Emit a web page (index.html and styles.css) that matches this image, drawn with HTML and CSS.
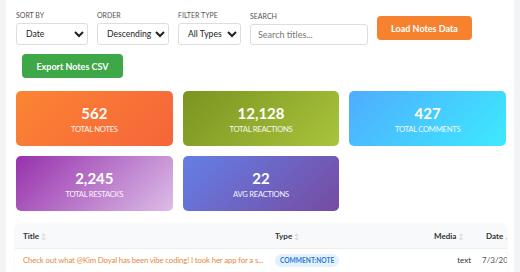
FILE: index.html
```html
<!DOCTYPE html>
<html>
<head>
<meta charset="utf-8">
<link rel="stylesheet" href="styles.css">
</head>
<body>
<div class="panel">
  <div class="controls">
    <div class="field">
      <label class="lbl">Sort by</label>
      <select class="sel w72"><option>Date</option></select>
    </div>
    <div class="field">
      <label class="lbl">Order</label>
      <select class="sel w72"><option>Descending</option></select>
    </div>
    <div class="field">
      <label class="lbl">Filter type</label>
      <select class="sel w63"><option>All Types</option></select>
    </div>
    <div class="field">
      <label class="lbl">Search</label>
      <input class="search" type="text" placeholder="Search titles...">
    </div>
    <button class="btn btn-orange">Load Notes Data</button>
    <button class="btn btn-green">Export Notes CSV</button>
  </div>

  <div class="cards">
    <div class="card c1"><div class="num">562</div><div class="cap">Total Notes</div></div>
    <div class="card c2"><div class="num">12,128</div><div class="cap">Total Reactions</div></div>
    <div class="card c3"><div class="num">427</div><div class="cap">Total Comments</div></div>
    <div class="card c4"><div class="num">2,245</div><div class="cap">Total Restacks</div></div>
    <div class="card c5"><div class="num">22</div><div class="cap">Avg Reactions</div></div>
  </div>

  <div class="table-wrap">
    <table class="tbl">
      <colgroup>
        <col class="col-title"><col class="col-type"><col class="col-media"><col class="col-date">
      </colgroup>
      <thead>
        <tr>
          <th>Title <span class="sort">↕</span></th>
          <th>Type <span class="sort">↕</span></th>
          <th>Media <span class="sort">↕</span></th>
          <th>Date <span class="sort active">↓</span></th>
        </tr>
      </thead>
      <tbody>
        <tr>
          <td class="title">Check out what @Kim Doyal has been vibe coding! I took her app for a s...</td>
          <td class="type"><span class="badge">COMMENT:NOTE</span></td>
          <td class="media">text</td>
          <td class="date">7/3/2025</td>
        </tr>
      </tbody>
    </table>
  </div>
</div>
</body>
</html>
```

FILE: styles.css
```css
* { box-sizing: border-box; }
html, body { margin: 0; padding: 0; }
body {
  background: #f3f4f6;
  font-family: Lato, "Open Sans", "Liberation Sans", sans-serif;
  color: #333;
  height: 272px;
  overflow: hidden;
}
.panel {
  background: #fff;
  margin: 0 6px;
  padding: 11px 8px 0 10px;
  height: 272px;
  overflow: hidden;
}
.controls {
  display: flex;
  flex-wrap: wrap;
  align-items: center;
  gap: 9px;
}
.field { display: flex; flex-direction: column; }
.lbl {
  font-size: 7px;
  text-transform: uppercase;
  color: #555;
  margin-bottom: 3px;
  line-height: 9px;
}
.sel {
  height: 22px;
  border: 1px solid #ddd;
  border-radius: 3px;
  background: #fff;
  font-family: inherit;
  font-size: 8.6px;
  color: #222;
  padding: 0 0 0 5px;
}
.w72 { width: 72px; }
.w63 { width: 63px; }
.search {
  width: 118px;
  height: 21px;
  border: 1px solid #ddd;
  border-radius: 3px;
  font-family: inherit;
  font-size: 9px;
  padding: 0 7px;
}
.search::placeholder { color: #777; }
.btn {
  border: none;
  border-radius: 4px;
  color: #fff;
  font-family: inherit;
  font-weight: 700;
  font-size: 9px;
  height: 24px;
  padding: 0;
}
.btn-orange { background: #f6822f; width: 95px; }
.btn-green { background: #3ea748; width: 101px; margin-left: 6px; }
.cards {
  display: grid;
  width: 490px;
  grid-template-columns: repeat(3, 1fr);
  gap: 10px 10px;
  margin-top: 13px;
}
.card {
  height: 55px;
  border-radius: 5px;
  color: #fff;
  display: flex;
  flex-direction: column;
  align-items: center;
  justify-content: center;
}
.num { font-size: 15px; font-weight: 700; line-height: 18px; }
.cap { font-size: 7.7px; text-transform: uppercase; opacity: 0.92; line-height: 10px; margin-top: 2px; letter-spacing: -0.3px; }
.c1 { background: linear-gradient(135deg, #fb8533, #f6643a); }
.c2 { background: linear-gradient(135deg, #7a9420, #a9c43c); }
.c3 { background: linear-gradient(135deg, #4facfe, #3deafe); }
.c4 { background: linear-gradient(135deg, #9631ad, #dcbde6); }
.c5 { background: linear-gradient(135deg, #647fe6, #764ba2); }
.table-wrap {
  margin-top: 13px;
  margin-left: -1px;
  width: 492px;
  border-radius: 6px 6px 0 0;
  overflow: hidden;
  box-shadow: 0 0 2px rgba(0,0,0,0.08);
}
.tbl {
  border-collapse: collapse;
  width: 530px;
  table-layout: fixed;
  font-size: 8px;
}
.col-title { width: 252px; }
.col-type { width: 159px; }
.col-media { width: 52px; }
.col-date { width: 67px; }
.tbl th {
  background: #f8f9fa;
  text-align: left;
  font-weight: 700;
  height: 24px;
  padding: 0 0 0 8px;
  border-bottom: 1px solid #eceef0;
  color: #333;
  white-space: nowrap;
}
.sort { color: #cfcfcf; font-weight: 400; font-size: 7px; }
.sort.active { color: #f6822f; }
.tbl td {
  height: 24px;
  padding: 0 0 0 8px;
  white-space: nowrap;
  overflow: hidden;
}
.title { color: #e6873c; font-size: 7.8px; letter-spacing: -0.15px; }
.badge {
  display: inline-block;
  background: #e3f1fc;
  color: #2a7ad2;
  font-weight: 700;
  font-size: 6.6px;
  padding: 3px 5px;
  border-radius: 7px;
  line-height: 7px;
}
.tbl td.media { text-align: right; padding: 0 7px 0 0; color: #333; }
.tbl td.date { color: #555; padding-left: 4px; }
```
